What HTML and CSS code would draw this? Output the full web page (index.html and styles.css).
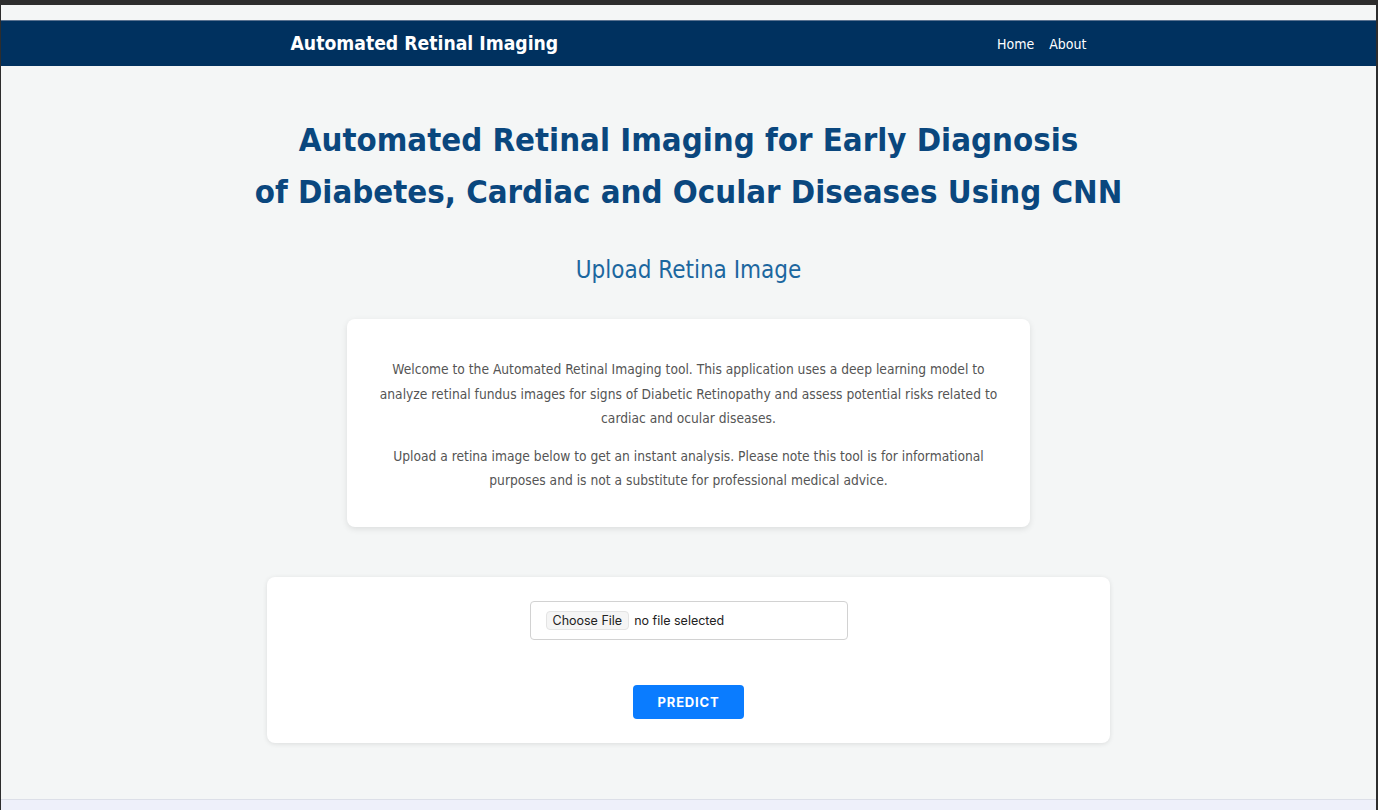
FILE: index.html
```html
<!DOCTYPE html>
<html lang="en">
<head>
<meta charset="utf-8">
<title>Automated Retinal Imaging</title>
<link rel="stylesheet" href="styles.css">
</head>
<body>
<header class="navbar">
  <div class="nav-inner">
    <a class="brand" href="#">Automated Retinal Imaging</a>
    <nav class="nav-links">
      <a href="#">Home</a>
      <a href="#">About</a>
    </nav>
  </div>
</header>
<main class="main">
  <h1 class="title">Automated Retinal Imaging for Early Diagnosis<br>of Diabetes, Cardiac and Ocular Diseases Using CNN</h1>
  <h2 class="subtitle">Upload Retina Image</h2>
  <section class="info-card">
    <p>Welcome to the Automated Retinal Imaging tool. This application uses a deep learning model to analyze retinal fundus images for signs of Diabetic Retinopathy and assess potential risks related to cardiac and ocular diseases.</p>
    <p>Upload a retina image below to get an instant analysis. Please note this tool is for informational purposes and is not a substitute for professional medical advice.</p>
  </section>
  <form class="upload-card" onsubmit="return false;">
    <label class="file-box">
      <span class="file-btn">Choose File</span>
      <span class="file-name">no file selected</span>
    </label>
    <button class="predict" type="submit">PREDICT</button>
  </form>
</main>
<footer class="footer"></footer>
</body>
</html>
```
FILE: styles.css
```css
* { box-sizing: border-box; }
html, body { height: 100%; }
body {
  margin: 0;
  background: #f4f6f6;
  border-top: 5px solid #2d2d2d;
  border-left: 1px solid #2d2d2d;
  border-right: 2px solid #2d2d2d;
  padding-top: 15px;
  font-family: "DejaVu Sans Condensed", "DejaVu Sans", sans-serif;
  display: flex;
  flex-direction: column;
  overflow: hidden;
}
.navbar {
  background: #00315f;
  height: 46px;
  border-top: 1px solid #5a7290;
}
.nav-inner {
  width: 796px;
  margin: 0 auto;
  height: 100%;
  display: flex;
  align-items: center;
  justify-content: space-between;
}
.brand {
  color: #fff;
  font-weight: bold;
  font-size: 19.2px;
  text-decoration: none;
}
.nav-links { display: flex; gap: 15px; }
.nav-links a {
  color: #fff;
  text-decoration: none;
  font-size: 14px;
}
.main {
  flex: 1;
  display: flex;
  flex-direction: column;
  align-items: center;
}
.title {
  margin: 48px 0 0;
  color: #0a477e;
  font-size: 32.7px;
  line-height: 52px;
  text-align: center;
  font-weight: bold;
}
.subtitle {
  margin: 36px 0 0;
  color: #1c679f;
  font-weight: normal;
  font-size: 24px;
  line-height: 32px;
}
.info-card {
  margin-top: 33px;
  width: 683px;
  background: #fff;
  border-radius: 8px;
  box-shadow: 0 2px 6px rgba(0,0,0,0.1);
  padding: 38px 30px 34px;
  text-align: center;
  color: #555;
  font-size: 13.7px;
  line-height: 24.5px;
}
.info-card p { margin: 0; }
.info-card p + p { margin-top: 13px; }
.upload-card {
  margin-top: 50px;
  width: 843px;
  background: #fff;
  border-radius: 8px;
  box-shadow: 0 1px 5px rgba(0,0,0,0.1);
  padding: 24px 0 24px;
  display: flex;
  flex-direction: column;
  align-items: center;
  gap: 45px;
}
.file-box {
  width: 318px;
  height: 39px;
  border: 1px solid #d2d2d2;
  border-radius: 4px;
  display: flex;
  align-items: center;
  padding-left: 15px;
  gap: 5px;
  font-family: "Inter", "Liberation Sans", sans-serif;
  font-size: 12.5px;
  color: #222;
}
.file-btn {
  background: #f5f5f5;
  border: 1px solid #e4e4e4;
  border-radius: 4px;
  padding: 1px 6px;
}
.predict {
  width: 111px;
  height: 34px;
  background: #0a7cff;
  color: #fff;
  border: none;
  border-radius: 4px;
  font-family: "Inter", "Liberation Sans", sans-serif;
  font-weight: 700;
  font-size: 13px;
  letter-spacing: 0.8px;
}
.footer {
  height: 11px;
  background: #eef0fa;
  border-top: 1px solid #dcdfe8;
}
```
